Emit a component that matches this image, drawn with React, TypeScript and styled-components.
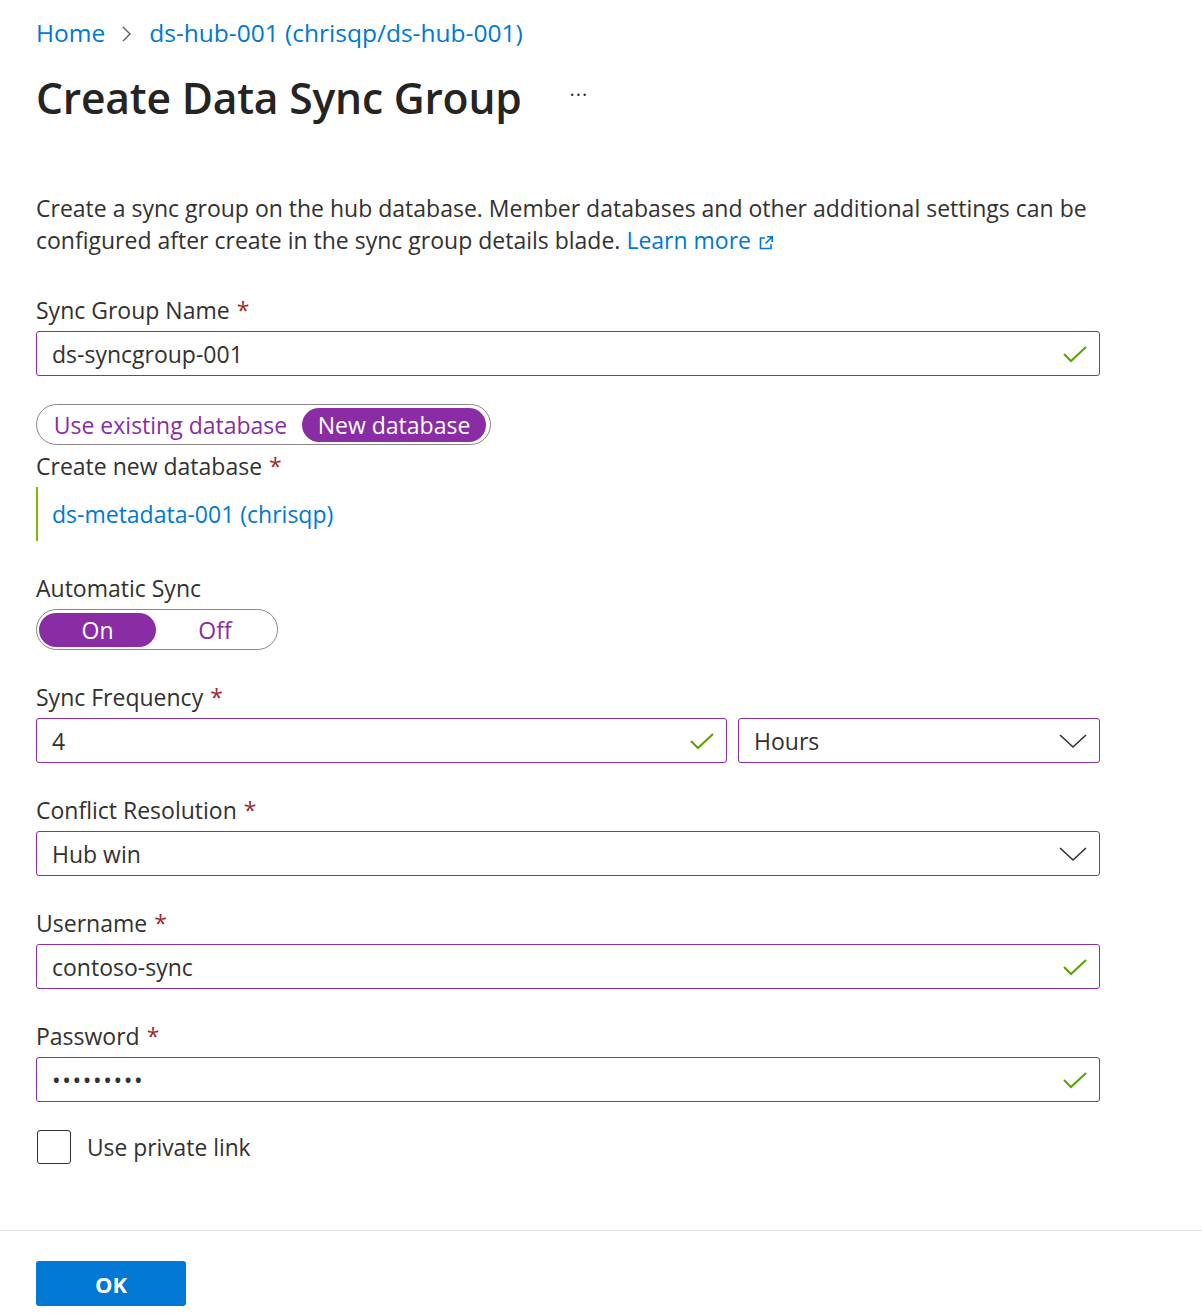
import React, { FC } from 'react';
import styled, { createGlobalStyle } from 'styled-components';

const GlobalStyle = createGlobalStyle`
  html, body {
    margin: 0;
    padding: 0;
    background: #fff;
  }
  body {
    font-family: "Open Sans", "Noto Sans", sans-serif;
    color: #323130;
  }
  * { box-sizing: border-box; }
`

const PURPLE = '#8a2da5'
const BLUE = '#0078d4'
const TEXT_SIZE = '23px'

const PageStyle = styled.div`
  width: 1202px;
  min-height: 1313px;
  display: flex;
  flex-direction: column;
`

const ContentStyle = styled.div`
  padding: 17px 0 0 36px;
  width: 1100px;
`

const BreadcrumbStyle = styled.nav`
  display: flex;
  align-items: center;
  gap: 16px;
  font-size: 24.5px;
  line-height: 32px;
  & > a {
    color: ${BLUE};
    text-decoration: none;
  }
  & > svg { margin-top: 2px; }
`

const TitleRowStyle = styled.div`
  display: flex;
  align-items: center;
  gap: 48px;
  margin-top: 20px;
  height: 56px;
  & > h1 {
    margin: 0;
    font-size: 42.6px;
    font-weight: 600;
    color: #252423;
    letter-spacing: -0.2px;
  }
`

const MoreStyle = styled.span`
  font-size: 20px;
  letter-spacing: 1px;
  color: #323130;
  margin-top: -6px;
`

const DescriptionStyle = styled.p`
  margin: 67px 0 0 0;
  font-size: 23px;
  line-height: 32px;
  width: 1090px;
  & > a {
    color: ${BLUE};
    text-decoration: none;
    white-space: nowrap;
  }
  & svg { vertical-align: -2px; margin-left: 7px; }
`

const FieldStyle = styled.div<{ $top: number }>`
  margin-top: ${p => p.$top}px;
  display: flex;
  flex-direction: column;
  gap: 6px;
`

const LabelStyle = styled.label`
  font-size: ${TEXT_SIZE};
  line-height: 30px;
  color: #323130;
  & > span {
    color: #a4262c;
    margin-left: 7px;
  }
`

const BoxStyle = styled.div<{ $secret?: boolean }>`
  height: 45px;
  flex: 0 0 45px;
  border: 1px solid ${PURPLE};
  border-radius: 3px;
  display: flex;
  align-items: center;
  padding: 0 11px 0 15px;
  font-size: ${TEXT_SIZE};
  color: #323130;
  & > span {
    flex: 1;
    letter-spacing: ${p => p.$secret ? '1.6px' : 'normal'};
  }
`

const RowStyle = styled.div`
  display: flex;
  gap: 11px;
  & > div:first-child { flex: 1; }
  & > div:last-child { flex: 0 0 362px; }
`

const PillGroupStyle = styled.div<{ $width: number }>`
  width: ${p => p.$width}px;
  height: 41px;
  border: 1px solid #8a8886;
  border-radius: 21px;
  display: flex;
  align-items: center;
  padding: 0 3px 0 2px;
`

const PillStyle = styled.div<{ $active?: boolean; $width: number }>`
  height: 34px;
  width: ${p => p.$width}px;
  border-radius: 17px;
  display: flex;
  align-items: center;
  justify-content: center;
  font-size: ${TEXT_SIZE};
  white-space: nowrap;
  background: ${p => p.$active ? PURPLE : 'transparent'};
  color: ${p => p.$active ? '#fff' : PURPLE};
`

const LinkBlockStyle = styled.div`
  height: 54px;
  border-left: 2px solid #7fba00;
  display: flex;
  align-items: center;
  padding-left: 14px;
  font-size: ${TEXT_SIZE};
  color: ${BLUE};
`

const CheckRowStyle = styled.div`
  margin-top: 28px;
  display: flex;
  align-items: center;
  gap: 16px;
  font-size: 22.8px;
  padding-left: 1px;
`

const CheckboxStyle = styled.div`
  width: 34px;
  height: 34px;
  border: 1px solid #323130;
  border-radius: 3px;
`

const FooterStyle = styled.div`
  margin-top: 66px;
  border-top: 1px solid #e1dfdd;
  padding: 30px 0 0 36px;
`

const OkButtonStyle = styled.button`
  width: 150px;
  height: 45px;
  border: none;
  border-radius: 3px;
  background: ${BLUE};
  color: #fff;
  font-family: "Open Sans", sans-serif;
  font-size: 22px;
  font-weight: 700;
  cursor: pointer;
`

const CheckIcon: FC = () => (
  <svg width="26" height="20" viewBox="0 0 26 20">
    <polyline points="2,10 9,17 24,3" fill="none" stroke="#57a300" strokeWidth="2" />
  </svg>
)

const ChevronIcon: FC = () => (
  <svg width="30" height="18" viewBox="0 0 30 18">
    <polyline points="2,3 15,15 28,3" fill="none" stroke="#323130" strokeWidth="1.6" />
  </svg>
)

const ExternalIcon: FC = () => (
  <svg width="16" height="16" viewBox="0 0 16 16">
    <path d="M7 3H2.5v10.5H13V9" fill="none" stroke={BLUE} strokeWidth="1.6" />
    <path d="M9 1.8h5.2V7M14 2L7.5 8.5" fill="none" stroke={BLUE} strokeWidth="1.6" />
  </svg>
)

const BreadcrumbChevron: FC = () => (
  <svg width="12" height="18" viewBox="0 0 12 18">
    <polyline points="2,2 9,9 2,16" fill="none" stroke="#605e5c" strokeWidth="1.4" />
  </svg>
)

interface FieldProps {
  label: string;
  top: number;
  required?: boolean;
  children: React.ReactNode;
}

const Field: FC<FieldProps> = ({ label, top, required = true, children }) => (
  <FieldStyle $top={top}>
    <LabelStyle>
      {label}
      {required && <span>*</span>}
    </LabelStyle>
    {children}
  </FieldStyle>
)

const TextBox: FC<{ value: string; valid?: boolean; secret?: boolean }> = ({ value, valid = true, secret }) => (
  <BoxStyle $secret={secret}>
    <span>{value}</span>
    {valid && <CheckIcon />}
  </BoxStyle>
)

const SelectBox: FC<{ value: string }> = ({ value }) => (
  <BoxStyle>
    <span>{value}</span>
    <ChevronIcon />
  </BoxStyle>
)

const App: FC = () => {
  return <PageStyle>
    <GlobalStyle />
    <ContentStyle>
      <BreadcrumbStyle>
        <a href="#">Home</a>
        <BreadcrumbChevron />
        <a href="#">ds-hub-001 (chrisqp/ds-hub-001)</a>
      </BreadcrumbStyle>

      <TitleRowStyle>
        <h1>Create Data Sync Group</h1>
        <MoreStyle>···</MoreStyle>
      </TitleRowStyle>

      <DescriptionStyle>
        Create a sync group on the hub database. Member databases and other additional settings can be
        configured after create in the sync group details blade. <a href="#">Learn more<ExternalIcon /></a>
      </DescriptionStyle>

      <Field label="Sync Group Name" top={39}>
        <TextBox value="ds-syncgroup-001" />
      </Field>

      <FieldStyle $top={28}>
        <PillGroupStyle $width={455}>
          <PillStyle $width={263}>Use existing database</PillStyle>
          <PillStyle $active $width={184}>New database</PillStyle>
        </PillGroupStyle>
      </FieldStyle>

      <Field label="Create new database" top={6}>
        <LinkBlockStyle>ds-metadata-001 (chrisqp)</LinkBlockStyle>
      </Field>

      <Field label="Automatic Sync" top={32} required={false}>
        <PillGroupStyle $width={242}>
          <PillStyle $active $width={117}>On</PillStyle>
          <PillStyle $width={118}>Off</PillStyle>
        </PillGroupStyle>
      </Field>

      <Field label="Sync Frequency" top={32}>
        <RowStyle>
          <TextBox value="4" />
          <SelectBox value="Hours" />
        </RowStyle>
      </Field>

      <Field label="Conflict Resolution" top={32}>
        <SelectBox value="Hub win" />
      </Field>

      <Field label="Username" top={32}>
        <TextBox value="contoso-sync" />
      </Field>

      <Field label="Password" top={32}>
        <TextBox value="•••••••••" secret />
      </Field>

      <CheckRowStyle>
        <CheckboxStyle />
        Use private link
      </CheckRowStyle>
    </ContentStyle>

    <FooterStyle>
      <OkButtonStyle>OK</OkButtonStyle>
    </FooterStyle>
  </PageStyle>
}

export default App
